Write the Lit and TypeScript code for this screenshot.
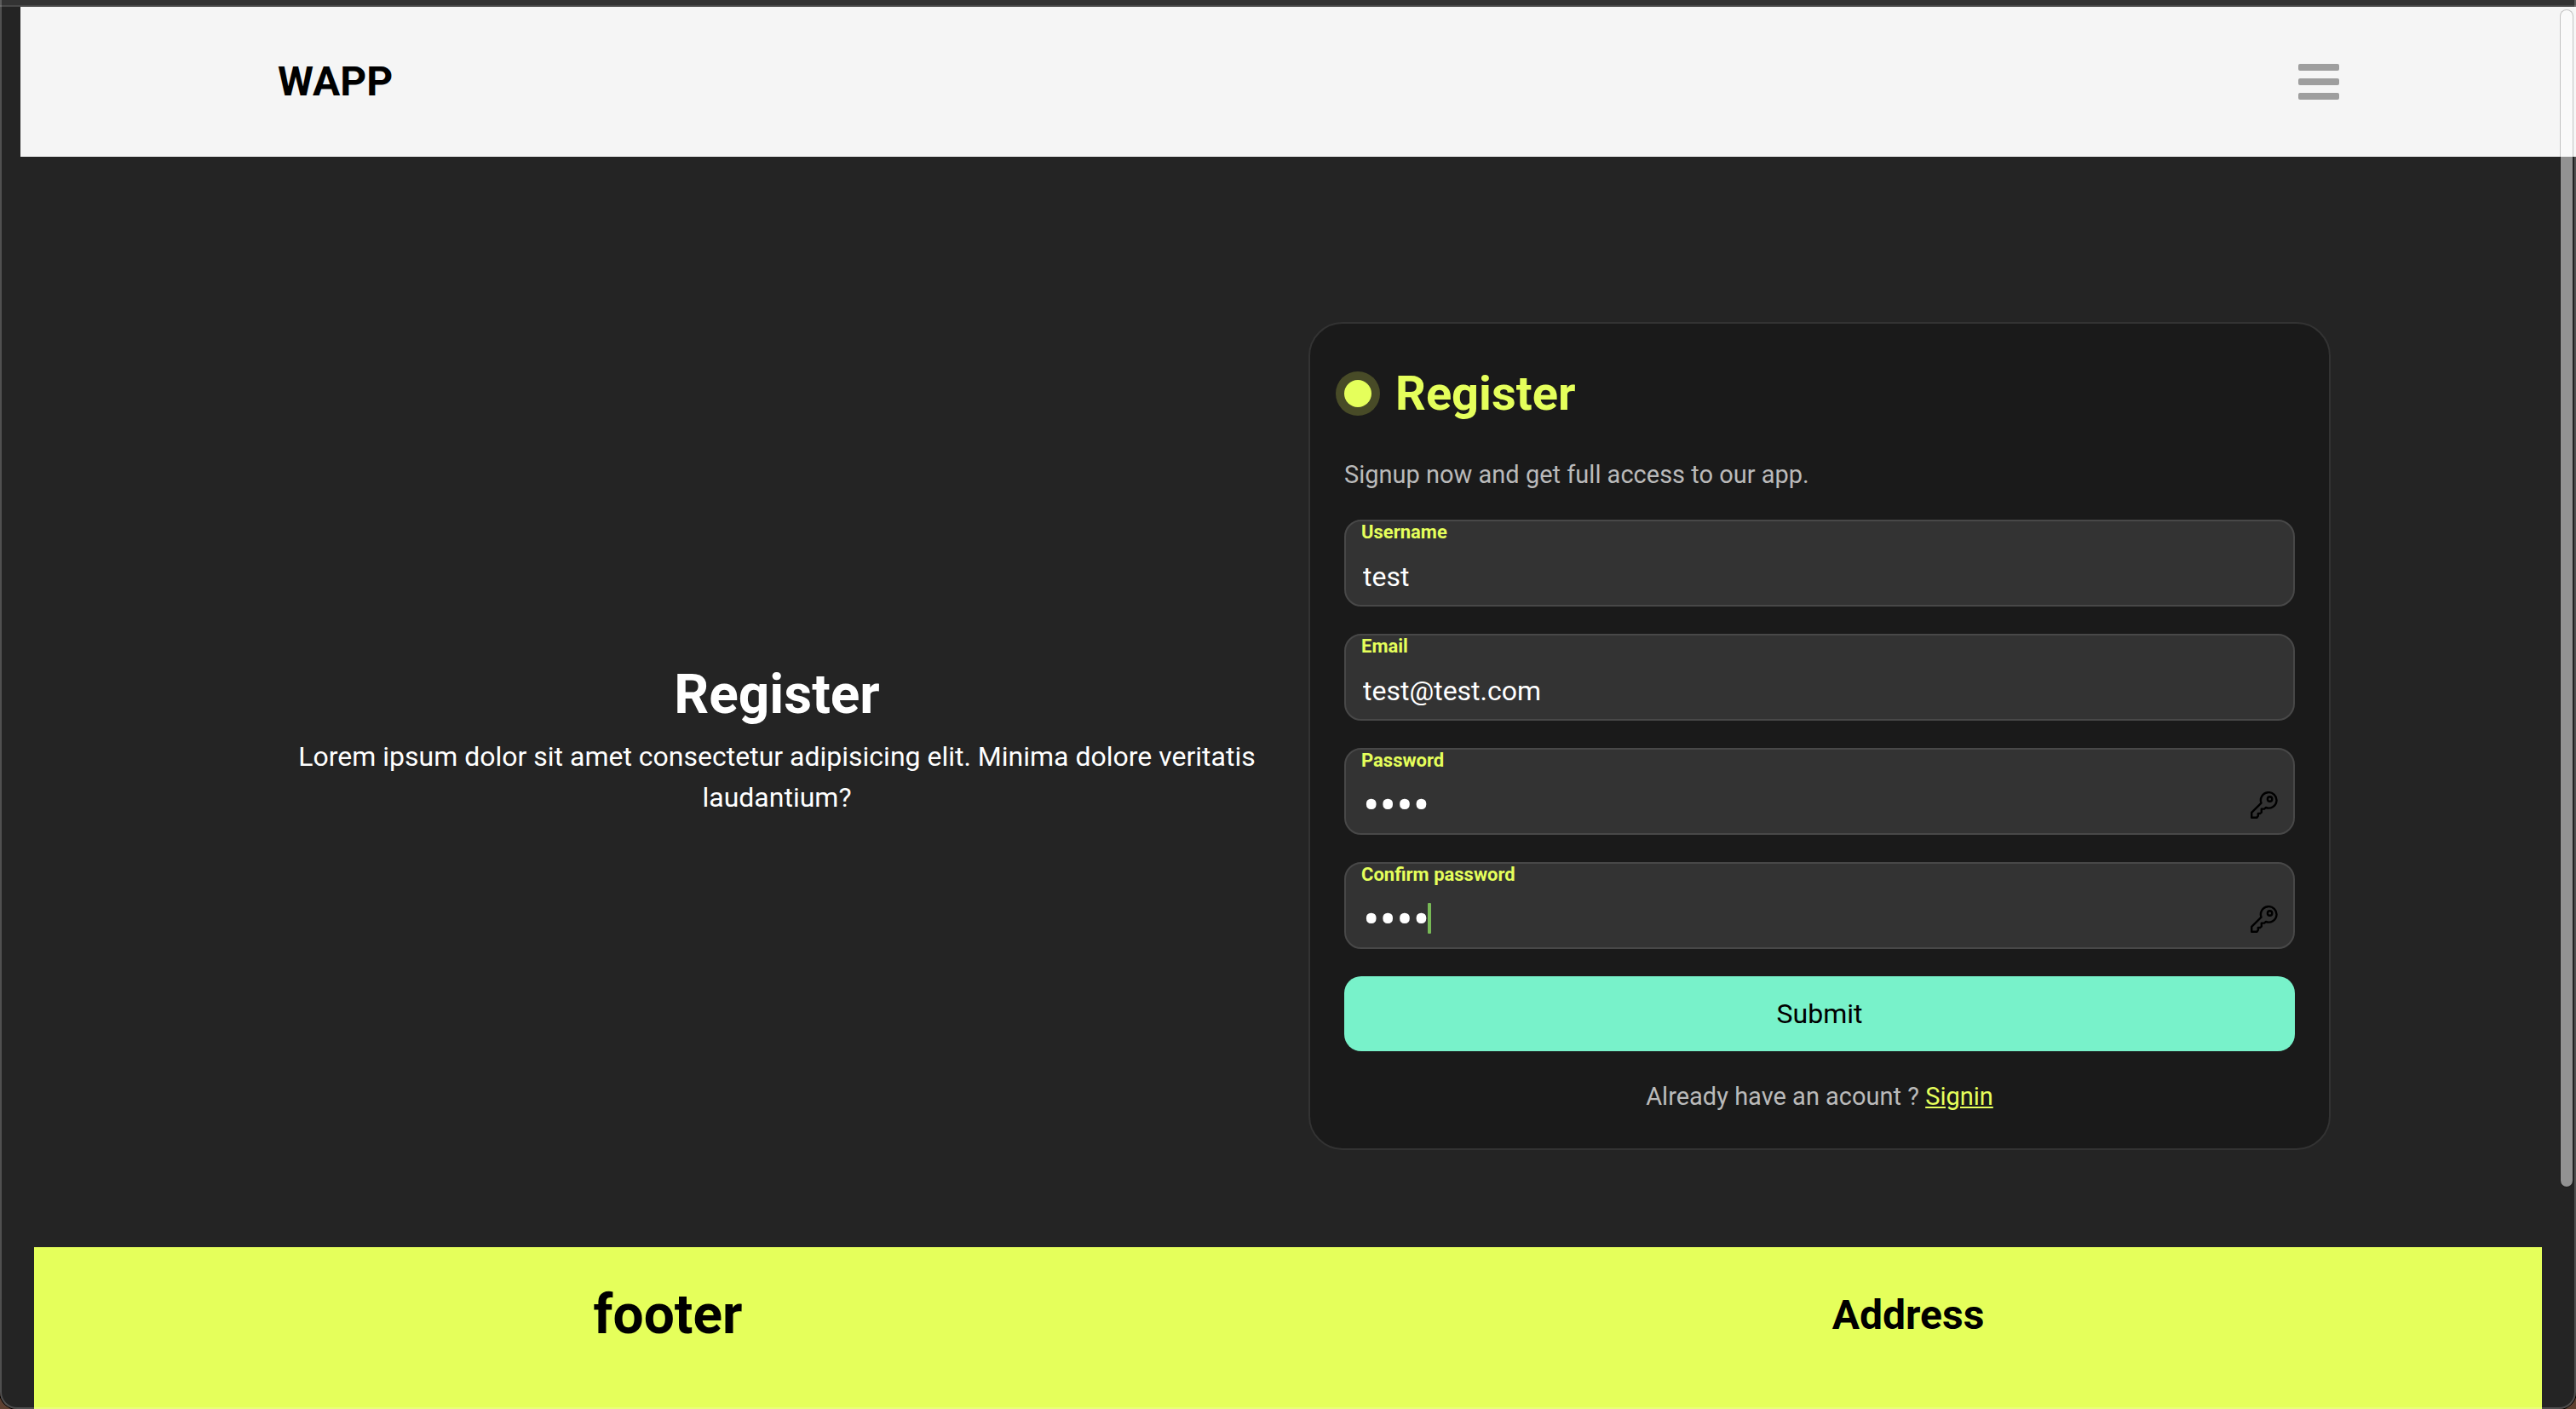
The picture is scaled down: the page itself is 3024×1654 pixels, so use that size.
import { LitElement, html, css, nothing } from "lit";
import { customElement, property } from "lit/decorators.js";

const FONT = css`Roboto, "Liberation Sans", sans-serif`;

@customElement("form-field")
class FormField extends LitElement {
  @property() label = "";
  @property() name = "";
  @property() type = "text";
  @property() value = "";
  @property({ type: Boolean }) caret = false;

  static styles = css`
    :host {
      display: block;
    }
    .field {
      position: relative;
      display: flex;
      flex-direction: column;
      box-sizing: border-box;
      height: 102px;
      border: 2px solid #484848;
      border-radius: 20px;
      background: #333;
      font-family: ${FONT};
    }
    .label {
      padding-left: 18px;
      font-size: 22px;
      line-height: 26px;
      font-weight: 700;
      color: #e5ff5b;
    }
    .row {
      flex: 1;
      display: flex;
      align-items: center;
      padding: 6px 18px 0 20px;
    }
    .input {
      flex: 1;
      min-width: 0;
      height: 40px;
      padding: 0;
      border: 0;
      outline: 0;
      background: transparent;
      color: #fff;
      font-family: inherit;
      font-size: 32px;
      line-height: 40px;
    }
    .input[type="password"] {
      font-size: 58px;
    }
    .key {
      width: 32px;
      height: 32px;
    }
    .caret {
      position: absolute;
      left: 96px;
      top: 46px;
      width: 4px;
      height: 36px;
      border-radius: 1px;
      background: #78b956;
    }
  `;

  render() {
    return html`
      <div class="field">
        <label class="label" for="control">${this.label}</label>
        <div class="row">
          <input class="input" id="control" name=${this.name} type=${this.type} .value=${this.value} />
          ${this.type === "password"
            ? html`<svg class="key" viewBox="0 0 32 32" fill="none" stroke="#000" stroke-width="2.4" stroke-linejoin="round" aria-hidden="true">
                <path d="M12.5 13.6A9.3 9.2 0 1 1 18 19L16 20.6H12.8V24.6L11 26H8.8V28.8L7.4 30.8H1.2V24.8Z" />
                <circle cx="22.6" cy="9" r="2.7" />
              </svg>`
            : nothing}
        </div>
        ${this.caret ? html`<span class="caret"></span>` : nothing}
      </div>
    `;
  }
}

@customElement("app-root")
class AppRoot extends LitElement {
  static styles = css`
    :host {
      display: block;
      height: 100vh;
      overflow: hidden;
      position: relative;
      background: #242424;
      font-family: ${FONT};
      color: #fff;
    }
    h1,
    h2,
    p {
      margin: 0;
    }
    .page {
      display: flex;
      flex-direction: column;
      height: 100%;
    }
    .chrome {
      flex: none;
      box-sizing: border-box;
      height: 8px;
      background: #333;
      border-bottom: 2px solid #484848;
    }
    .header {
      display: flex;
      align-items: center;
      justify-content: space-between;
      box-sizing: border-box;
      height: 176px;
      margin-left: 24px;
      padding: 0 278px 0 302px;
      background: #f5f5f5;
      color: #000;
    }
    .brand {
      font-size: 48px;
      line-height: 72px;
      font-weight: 700;
      color: inherit;
      text-decoration: none;
    }
    .menu {
      display: flex;
      padding: 0;
      border: 0;
      background: none;
    }
    .menu-icon {
      width: 48px;
      height: 42px;
      fill: #9e9e9e;
    }
    .hero {
      display: grid;
      grid-template-columns: 1fr 1fr;
      align-items: center;
      gap: 24px;
      padding: 194px 288px 114px 312px;
    }
    .intro {
      padding: 0 24px;
      text-align: center;
    }
    .intro-title {
      font-size: 64px;
      line-height: 96px;
      font-weight: 700;
    }
    .intro-text {
      font-size: 32px;
      line-height: 48px;
    }
    .card {
      display: flex;
      flex-direction: column;
      gap: 32px;
      box-sizing: border-box;
      padding: 40px;
      border: 2px solid #333;
      border-radius: 40px;
      background: #1a1a1a;
    }
    .card-title {
      display: flex;
      align-items: center;
      gap: 28px;
      font-size: 56px;
      line-height: 84px;
      font-weight: 700;
      color: #e5ff5b;
    }
    .dot {
      width: 32px;
      height: 32px;
      border-radius: 50%;
      background: #e5ff5b;
      box-shadow: 0 0 0 10px #484b27;
    }
    .note {
      font-size: 29px;
      line-height: 42px;
      color: #bababa;
    }
    .note-center {
      text-align: center;
    }
    .link {
      color: #e5ff5b;
    }
    .submit {
      height: 88px;
      padding: 0;
      border: 0;
      border-radius: 20px;
      background: #78f2ca;
      color: #000;
      font-family: inherit;
      font-size: 32px;
    }
    .footer {
      flex: 1;
      display: grid;
      grid-template-columns: 1fr 1fr;
      align-items: start;
      margin: 0 40px;
      padding: 32px 16px 0;
      background: #e5ff5b;
      color: #000;
      text-align: center;
    }
    .footer-title {
      font-size: 64px;
      line-height: 96px;
    }
    .footer-subtitle {
      font-size: 48px;
      line-height: 96px;
    }
    .scrollbar {
      position: absolute;
      right: 3px;
      top: 11px;
      bottom: 260px;
      box-sizing: border-box;
      width: 16px;
      border: 1px solid rgba(0, 0, 0, 0.2);
      border-radius: 8px;
      background: rgba(255, 255, 255, 0.5);
      background-clip: padding-box;
    }
    .frame {
      position: absolute;
      inset: 0;
      border: 2px solid rgba(255, 255, 255, 0.2);
      border-top: 0;
      border-radius: 0 0 20px 20px;
      box-shadow: 0 0 0 1px #000, 0 0 0 16px #5e4030;
      pointer-events: none;
    }
  `;

  render() {
    return html`
      <div class="page">
        <div class="chrome"></div>
        <header class="header">
          <a class="brand" href="#">WAPP</a>
          <button class="menu" type="button" aria-label="Menu">
            <svg class="menu-icon" viewBox="0 0 48 42" aria-hidden="true">
              <rect width="48" height="8" rx="2" />
              <rect y="17" width="48" height="8" rx="2" />
              <rect y="34" width="48" height="8" rx="2" />
            </svg>
          </button>
        </header>
        <main class="hero">
          <section class="intro">
            <h1 class="intro-title">Register</h1>
            <p class="intro-text">
              Lorem ipsum dolor sit amet consectetur adipisicing elit. Minima dolore veritatis laudantium?
            </p>
          </section>
          <form class="card" @submit=${(e: Event) => e.preventDefault()}>
            <h2 class="card-title"><span class="dot"></span>Register</h2>
            <p class="note">Signup now and get full access to our app.</p>
            <form-field label="Username" name="username" value="test"></form-field>
            <form-field label="Email" name="email" type="email" value="test@test.com"></form-field>
            <form-field label="Password" name="password" type="password" value="test"></form-field>
            <form-field label="Confirm password" name="confirm" type="password" value="test" caret></form-field>
            <button class="submit" type="submit">Submit</button>
            <p class="note note-center">Already have an acount ? <a class="link" href="#">Signin</a></p>
          </form>
        </main>
        <footer class="footer">
          <h1 class="footer-title">footer</h1>
          <h2 class="footer-subtitle">Address</h2>
        </footer>
      </div>
      <div class="scrollbar"></div>
      <div class="frame"></div>
    `;
  }
}
